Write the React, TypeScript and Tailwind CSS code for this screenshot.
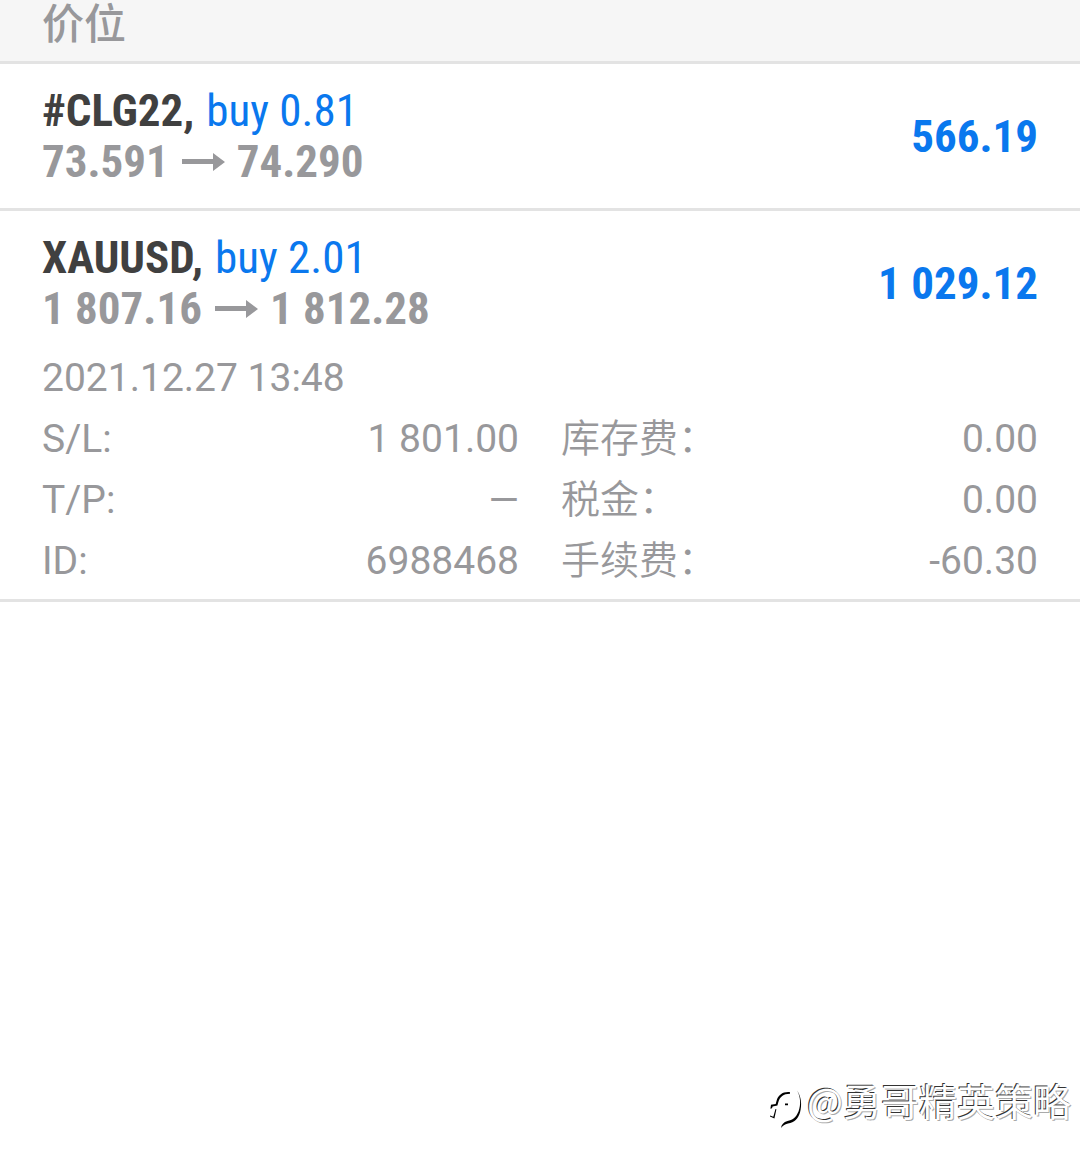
const positions = [
  {
    symbol: "#CLG22",
    side: "buy 0.81",
    open: "73.591",
    current: "74.290",
    profit: "566.19",
  },
  {
    symbol: "XAUUSD",
    side: "buy 2.01",
    open: "1 807.16",
    current: "1 812.28",
    profit: "1 029.12",
    time: "2021.12.27 13:48",
    details: [
      ["S/L:", "1 801.00", "库存费：", "0.00"],
      ["T/P:", "—", "税金：", "0.00"],
      ["ID:", "6988468", "手续费：", "-60.30"],
    ],
  },
];

const Arrow = () => (
  <svg viewBox="0 0 44 20" className="h-5 w-11 shrink-0" fill="currentColor">
    <path d="M1 7h31V1l12 9-12 9v-7H1z" />
  </svg>
);

const WatermarkLogo = () => (
  <svg viewBox="0 -10 44 56" className="h-14 w-11 shrink-0" fill="black">
    <path d="M27 10.200C20 9.500 15 13 13.500 19l-.8 3-4.700.8-.6 4 1.600-.6.600-1.800 4.800-1 .9-3.200c1.600-5.400 5-8.300 11.700-8.400z" />
    <path d="M34 8.500c3.500 6 4.200 14 1.500 21-2.500 6-6 8.500-11 9.500-4 1.200-6 3.500-6.500 7 1.700-2.500 3.600-3.800 7-4.600 6.500-1 10-4.500 12-11 2.200-8 1.200-16-3-21.900z" />
    <path d="M7 33.500l3.300 1.200L12.500 27l.9.300-2 9.200L7 34.600zM22 21.500h3v1.800h-3z" />
  </svg>
);

const PositionRow = ({ position }: { position: (typeof positions)[number] }) => {
  return (
    <li className="border-b-3 border-[#e3e3e3] px-[42px]">
      <div className="flex items-center justify-between pt-[21px] font-['Roboto_Condensed','Liberation_Sans_Narrow',sans-serif] text-[45px] leading-[51px]">
        <div>
          <div className="flex gap-3 text-[#0a78ee]">
            <div className="font-bold text-[#404040]">{position.symbol},</div>
            <div>{position.side}</div>
          </div>
          <div className="flex items-center gap-3 font-bold text-[#98989b]">
            <div>{position.open}</div>
            <Arrow />
            <div>{position.current}</div>
          </div>
        </div>
        <div className="font-bold text-[#0a78ee]">{position.profit}</div>
      </div>
      {position.details ? (
        <div className="pt-[14px] pb-[7px] text-[39px] leading-[61px] text-[#98989b]">
          <div>{position.time}</div>
          <table className="w-full table-fixed">
            <tbody>
              {position.details.map(([label, value, feeLabel, fee]) => (
                <tr key={label}>
                  <th className="text-left font-normal">{label}</th>
                  <td className="pr-[21px] text-right">{value}</td>
                  <th className="pl-[21px] text-left font-[350]">{feeLabel}</th>
                  <td className="text-right">{fee}</td>
                </tr>
              ))}
            </tbody>
          </table>
        </div>
      ) : (
        <div className="h-[21px]" />
      )}
    </li>
  );
};

const App = () => {
  return (
    <div className="flex min-h-screen flex-col bg-white font-[Roboto,'Noto_Sans_CJK_SC',sans-serif]">
      {/* Section heading */}
      <h2 className="border-b-3 border-[#e3e3e3] bg-[#f6f6f6] px-[42px] pb-[11px] text-[42px] leading-[50px] font-medium text-[#98989b]">
        价位
      </h2>
      <ul>
        {positions.map((position) => (
          <PositionRow key={position.symbol} position={position} />
        ))}
      </ul>
      {/* Watermark */}
      <div className="mt-auto flex items-center justify-end pr-[9px] pb-[37px] font-['Noto_Sans_CJK_SC',sans-serif] text-[38px] leading-[50px] text-white [text-shadow:-1px_-1px_0_#333,1px_1px_0_#aaa]">
        <WatermarkLogo />
        @勇哥精英策略
      </div>
    </div>
  );
};

export default App;
